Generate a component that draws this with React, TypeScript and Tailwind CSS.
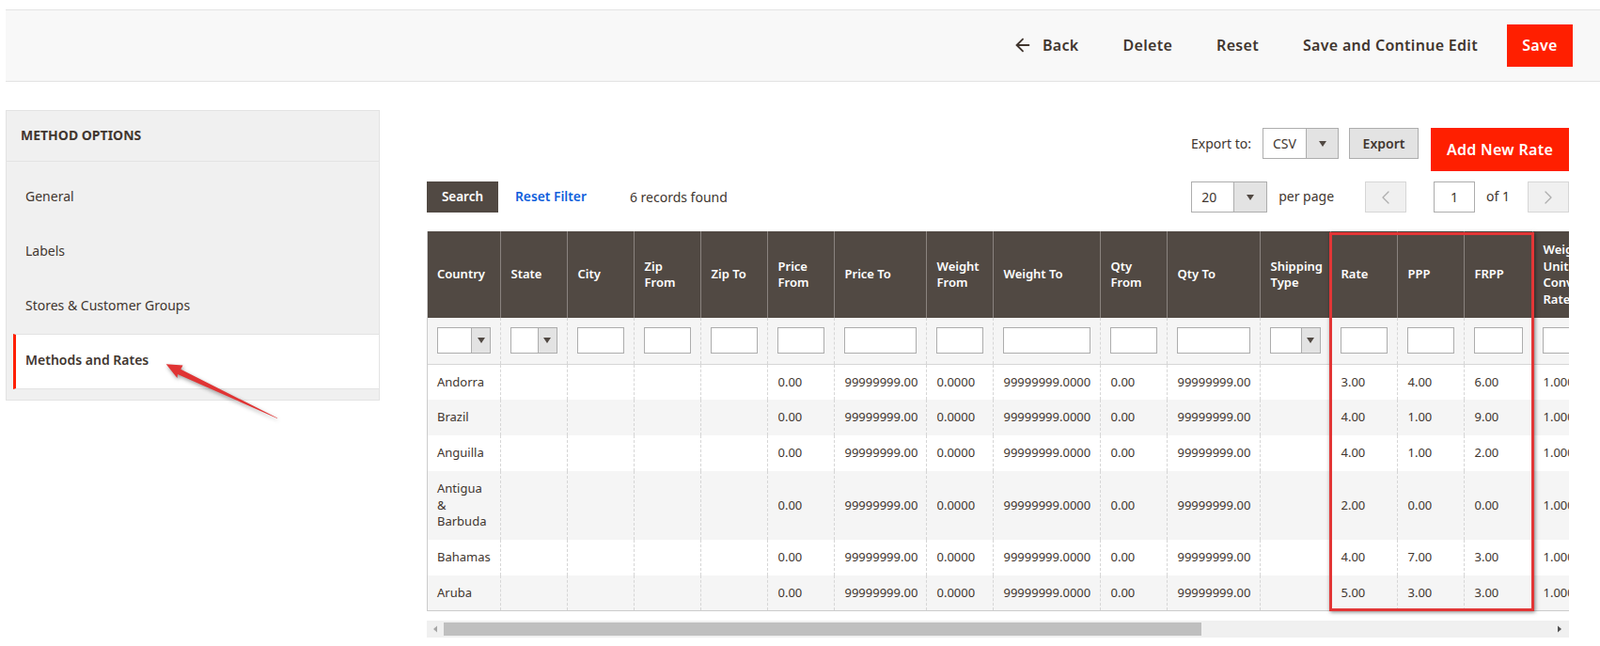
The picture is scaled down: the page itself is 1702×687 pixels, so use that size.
import { ArrowLeft, ChevronLeft, ChevronRight } from "lucide-react";
import type { ReactNode } from "react";

const columns = [
  { label: "Country", width: 77 },
  { label: "State", width: 71 },
  { label: "City", width: 71 },
  { label: "Zip From", width: 71 },
  { label: "Zip To", width: 71 },
  { label: "Price From", width: 71 },
  { label: "Price To", width: 98 },
  { label: "Weight From", width: 71 },
  { label: "Weight To", width: 114 },
  { label: "Qty From", width: 71 },
  { label: "Qty To", width: 99 },
  { label: "Shipping Type", width: 75 },
  { label: "Rate", width: 71 },
  { label: "PPP", width: 71 },
  { label: "FRPP", width: 73 },
  { label: "Weight Unit Conversion Rate", width: 90 },
];

const selectColumns = [0, 1, 11];

const rows = [
  { country: "Andorra", rate: "3.00", ppp: "4.00", frpp: "6.00", height: "h-[38px]" },
  { country: "Brazil", rate: "4.00", ppp: "1.00", frpp: "9.00", height: "h-[38px]" },
  { country: "Anguilla", rate: "4.00", ppp: "1.00", frpp: "2.00", height: "h-[38px]" },
  { country: "Antigua & Barbuda", rate: "2.00", ppp: "0.00", frpp: "0.00", height: "h-[73px]" },
  { country: "Bahamas", rate: "4.00", ppp: "7.00", frpp: "3.00", height: "h-[38px]" },
  { country: "Aruba", rate: "5.00", ppp: "3.00", frpp: "3.00", height: "h-[37px]" },
];

function Caret() {
  return (
    <svg width="8" height="6" viewBox="0 0 8 6">
      <path d="M0 0h8L4 6z" fill="#514943" />
    </svg>
  );
}

function SelectBox({ value, boxWidth, caretWidth, height }: { value?: string; boxWidth: number; caretWidth: number; height: number }) {
  return (
    <div className="flex border border-[#adadad] bg-white box-border" style={{ width: boxWidth, height }}>
      <span className="flex-1 pl-[10px] text-[14px] leading-none self-center">{value}</span>
      <span className="flex items-center justify-center bg-[#e3e3e3] border-l border-[#adadad]" style={{ width: caretWidth }}>
        <Caret />
      </span>
    </div>
  );
}

function ToolbarLink({ children }: { children: ReactNode }) {
  return <button className="pb-[2px] text-[16px] font-semibold text-[#41362f] tracking-[0.3px]">{children}</button>;
}

export default function App() {
  const navItems = ["General", "Labels", "Stores & Customer Groups"];

  return (
    <div className="relative w-[1702px] h-[687px] overflow-hidden bg-white pt-[10px] pl-[6px] text-[#41362f] font-['Open_Sans',sans-serif]">
      <div className="flex items-center justify-end h-[77px] pr-[29px] gap-[47px] bg-[#f8f8f8] border-y border-[#e3e3e3]">
        <button className="flex items-center gap-[10px] pb-[2px] text-[16px] font-semibold tracking-[0.3px]">
          <ArrowLeft className="w-[22px] h-[22px]" strokeWidth={2} />
          Back
        </button>
        <ToolbarLink>Delete</ToolbarLink>
        <ToolbarLink>Reset</ToolbarLink>
        <div className="flex items-center gap-[31px]">
          <ToolbarLink>Save and Continue Edit</ToolbarLink>
          <button className="w-[70px] h-[45px] pb-[2px] bg-[#ff1f00] text-white text-[16px] font-semibold tracking-[0.3px]">Save</button>
        </div>
      </div>

      <div className="flex mt-[30px] gap-[50px]">
        <aside className="w-[398px] h-[309px] bg-[#f0f0f0] border border-[#e3e3e3] box-border">
          <div className="flex items-center h-[54px] pl-[15px] pb-[3px] text-[14px] font-bold border-b border-[#e3e3e3]">METHOD OPTIONS</div>
          <nav className="pt-[7px]">
            {navItems.map((item) => (
              <div key={item} className="flex items-center h-[58px] pl-[20px] text-[14px]">{item}</div>
            ))}
            <div className="flex items-center h-[59px] mt-[2px] ml-[7px] pb-[4px] bg-white border-l-[3px] border-[#ff1f00] border-t border-b border-t-[#e3e3e3] border-b-[#e3e3e3] pl-[10px] text-[14px] font-semibold">
              Methods and Rates
            </div>
          </nav>
        </aside>

        <main className="w-[1215px] text-[14px]">
          <div className="flex justify-end mt-[19px] h-[46px]">
            <span className="mt-[6px] mr-[12px]">Export to:</span>
            <SelectBox value="CSV" boxWidth={81} caretWidth={34} height={33} />
            <button className="ml-[11px] w-[74px] h-[33px] bg-[#e3e3e3] border border-[#adadad] text-[14px] font-semibold">Export</button>
            <button className="ml-[13px] w-[147px] h-[46px] bg-[#ff1f00] text-white text-[16px] font-semibold tracking-[0.3px]">Add New Rate</button>
          </div>

          <div className="flex items-center justify-between mt-[11px] h-[33px]">
            <div className="flex items-center">
              <button className="w-[76px] h-[33px] bg-[#514943] text-white text-[13.5px] font-semibold">Search</button>
              <a className="ml-[18px] text-[#0f5fdc] text-[13.8px] font-semibold">Reset Filter</a>
              <span className="ml-[46px]">6 records found</span>
            </div>
            <div className="flex items-center">
              <SelectBox value="20" boxWidth={81} caretWidth={35} height={33} />
              <span className="ml-[12px] pb-[2px]">per page</span>
              <button className="flex items-center justify-center ml-[33px] w-[44px] h-[33px] bg-[#f0f0f0] border border-[#d6d6d6] text-[#adadad]">
                <ChevronLeft className="w-[24px] h-[24px]" strokeWidth={1.25} />
              </button>
              <input readOnly value="1" className="ml-[29px] w-[44px] h-[33px] border border-[#adadad] text-center text-[14px]" />
              <span className="ml-[12px] pb-[2px]">of 1</span>
              <button className="flex items-center justify-center ml-[19px] w-[44px] h-[33px] bg-[#f0f0f0] border border-[#d6d6d6] text-[#adadad]">
                <ChevronRight className="w-[24px] h-[24px]" strokeWidth={1.25} />
              </button>
            </div>
          </div>

          <div className="mt-[20px] overflow-hidden border-b border-[#cccccc] border-l">
            <table className="table-fixed border-collapse text-[13px] leading-[17.5px]" style={{ width: columns.reduce((sum, c) => sum + c.width, 0) }}>
              <colgroup>
                {columns.map((c) => (
                  <col key={c.label} style={{ width: c.width }} />
                ))}
              </colgroup>
              <thead>
                <tr className="h-[92px] bg-[#514943] text-white">
                  {columns.map((c, i) => (
                    <th key={c.label} className={(i === 0 ? "pl-[10px]" : "pl-[11px]") + " pr-[11px] py-[11px] text-left font-semibold border-r border-[#8a837f]"}>{c.label}</th>
                  ))}
                </tr>
              </thead>
              <tbody>
                <tr className="h-[49px] bg-[#f5f5f5] border-b border-[#d6d6d6]">
                  {columns.map((c, i) => (
                    <td key={c.label} className="pl-[10px] border-r border-dashed border-[#d6d6d6]">
                      {selectColumns.includes(i) ? (
                        <SelectBox boxWidth={i === 0 ? 57 : c.width - 21} caretWidth={20} height={28} />
                      ) : (
                        <input readOnly className="block h-[28px] border border-[#adadad] bg-white" style={{ width: c.width - 21 }} />
                      )}
                    </td>
                  ))}
                </tr>
                {rows.map((row, r) => {
                  const cells = [row.country, "", "", "", "", "0.00", "99999999.00", "0.0000", "99999999.0000", "0.00", "99999999.00", "", row.rate, row.ppp, row.frpp, "1.0000"];
                  return (
                    <tr key={row.country} className={row.height + (r % 2 === 1 ? " bg-[#f5f5f5]" : " bg-white")}>
                      {cells.map((cell, i) => (
                        <td key={i} className={(i === 0 ? "pl-[10px]" : "pl-[11px]") + " pr-[10px] border-r border-dashed border-[#d6d6d6]"}>{cell}</td>
                      ))}
                    </tr>
                  );
                })}
              </tbody>
            </table>
          </div>

          <div className="flex items-center mt-[10px] h-[18px] bg-[#f0f0f0]">
            <svg width="18" height="18" viewBox="0 0 18 18" className="shrink-0">
              <path d="M11 5.5v7L7 9z" fill="#a6a6a6" />
            </svg>
            <div className="w-[806px] h-[14px] bg-[#bfbfbf]" />
            <svg width="18" height="18" viewBox="0 0 18 18" className="ml-auto mr-[1px] shrink-0">
              <path d="M7 5.5v7L11 9z" fill="#505050" />
            </svg>
          </div>
        </main>
      </div>

      <div className="absolute left-[1414px] top-[247px] w-[218px] h-[403px] border-[3px] border-[#e23636] shadow-[1px_1px_4px_rgba(0,0,0,0.5)]" />

      <svg className="absolute left-[170px] top-[380px] w-[135px] h-[72px] drop-shadow-[1px_2px_2px_rgba(0,0,0,0.4)]" viewBox="170 380 135 72">
        <path d="M176.7 387.3 194.5 388.5 192.3 392.8 295 444.5 295 445 189 398 188.5 402z" fill="#e03434" />
      </svg>
    </div>
  );
}
